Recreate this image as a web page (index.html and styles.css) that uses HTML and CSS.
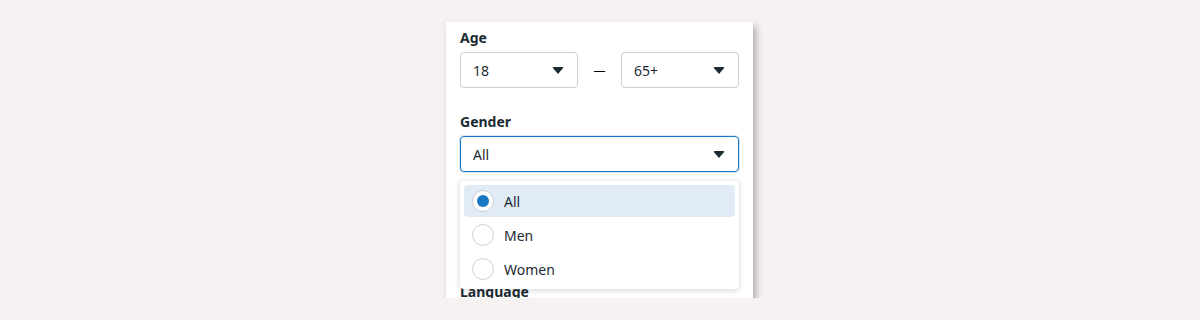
FILE: index.html
```html
<!DOCTYPE html>
<html lang="en">
<head>
  <meta charset="UTF-8">
  <meta name="viewport" content="width=device-width, initial-scale=1">
  <title>Audience</title>
  <link rel="stylesheet" href="styles.css">
</head>
<body>
  <div class="panel">
    <div class="field">
      <div class="label">Age</div>
      <div class="age-row">
        <div class="select"><span>18</span><i class="caret"></i></div>
        <span class="dash">—</span>
        <div class="select"><span>65+</span><i class="caret"></i></div>
      </div>
    </div>

    <div class="field gender">
      <div class="label">Gender</div>
      <div class="select focused"><span>All</span><i class="caret"></i></div>

      <ul class="menu">
        <li class="option active"><span class="radio checked"></span>All</li>
        <li class="option"><span class="radio"></span>Men</li>
        <li class="option"><span class="radio"></span>Women</li>
      </ul>
    </div>

    <div class="field language">
      <div class="label">Language</div>
    </div>
  </div>
</body>
</html>
```

FILE: styles.css
```css
:root {
  --bg: #f5f2f1;
  --text: #1c2b33;
  --border: #ccd0d5;
  --primary: #1877c5;
  --hover: #e0ebf6;
}

body {
  margin: 0;
  background: var(--bg);
  font-family: 'Noto Sans', 'Open Sans', sans-serif;
  color: var(--text);
}

.panel {
  width: 279px;
  height: 270px;
  margin: 22px 0 0 446px;
  padding: 6px 14px 0;
  background: #fff;
  box-shadow: 3px 4px 7px rgba(0,0,0,0.3);
  overflow: hidden;
}

.field {
  margin-bottom: 24px;
}

.label {
  font-size: 14px;
  font-weight: 700;
  line-height: 20px;
  margin-bottom: 4px;
}

.age-row {
  display: flex;
  align-items: center;
}

.age-row .select {
  flex: 1;
}

.dash {
  width: 43px;
  text-align: center;
  font-size: 12px;
  color: #000;
}

.select {
  display: flex;
  align-items: center;
  justify-content: space-between;
  height: 34px;
  padding: 0 12px;
  border: 1px solid var(--border);
  border-radius: 4px;
  font-size: 14px;
}

.select.focused {
  border-color: var(--primary);
  box-shadow: 0 0 0 1px #d6e6f4;
}

.caret {
  width: 0;
  height: 0;
  border-left: 6px solid transparent;
  border-right: 6px solid transparent;
  border-top: 7px solid var(--text);
  border-radius: 2px;
  margin-right: 1px;
}

.gender {
  position: relative;
}

.menu {
  position: absolute;
  top: 69px;
  left: 0;
  right: 0;
  margin: 0;
  padding: 4px;
  list-style: none;
  background: #fff;
  border-radius: 4px;
  box-shadow: 0 1px 6px rgba(0,0,0,0.18);
  z-index: 2;
}

.option {
  display: flex;
  align-items: center;
  gap: 10px;
  height: 32px;
  padding: 0 8px;
  margin-bottom: 2px;
  border-radius: 4px;
  font-size: 14px;
}

.option:last-child {
  margin-bottom: 0;
}

.option.active {
  background: var(--hover);
}

.radio {
  position: relative;
  width: 22px;
  height: 22px;
  box-sizing: border-box;
  border: 1px solid var(--border);
  border-radius: 50%;
  background: #fff;
}

.radio.checked::after {
  content: "";
  position: absolute;
  top: 4px;
  left: 4px;
  width: 12px;
  height: 12px;
  border-radius: 50%;
  background: var(--primary);
}

.language {
  margin-top: 110px;
}
```
